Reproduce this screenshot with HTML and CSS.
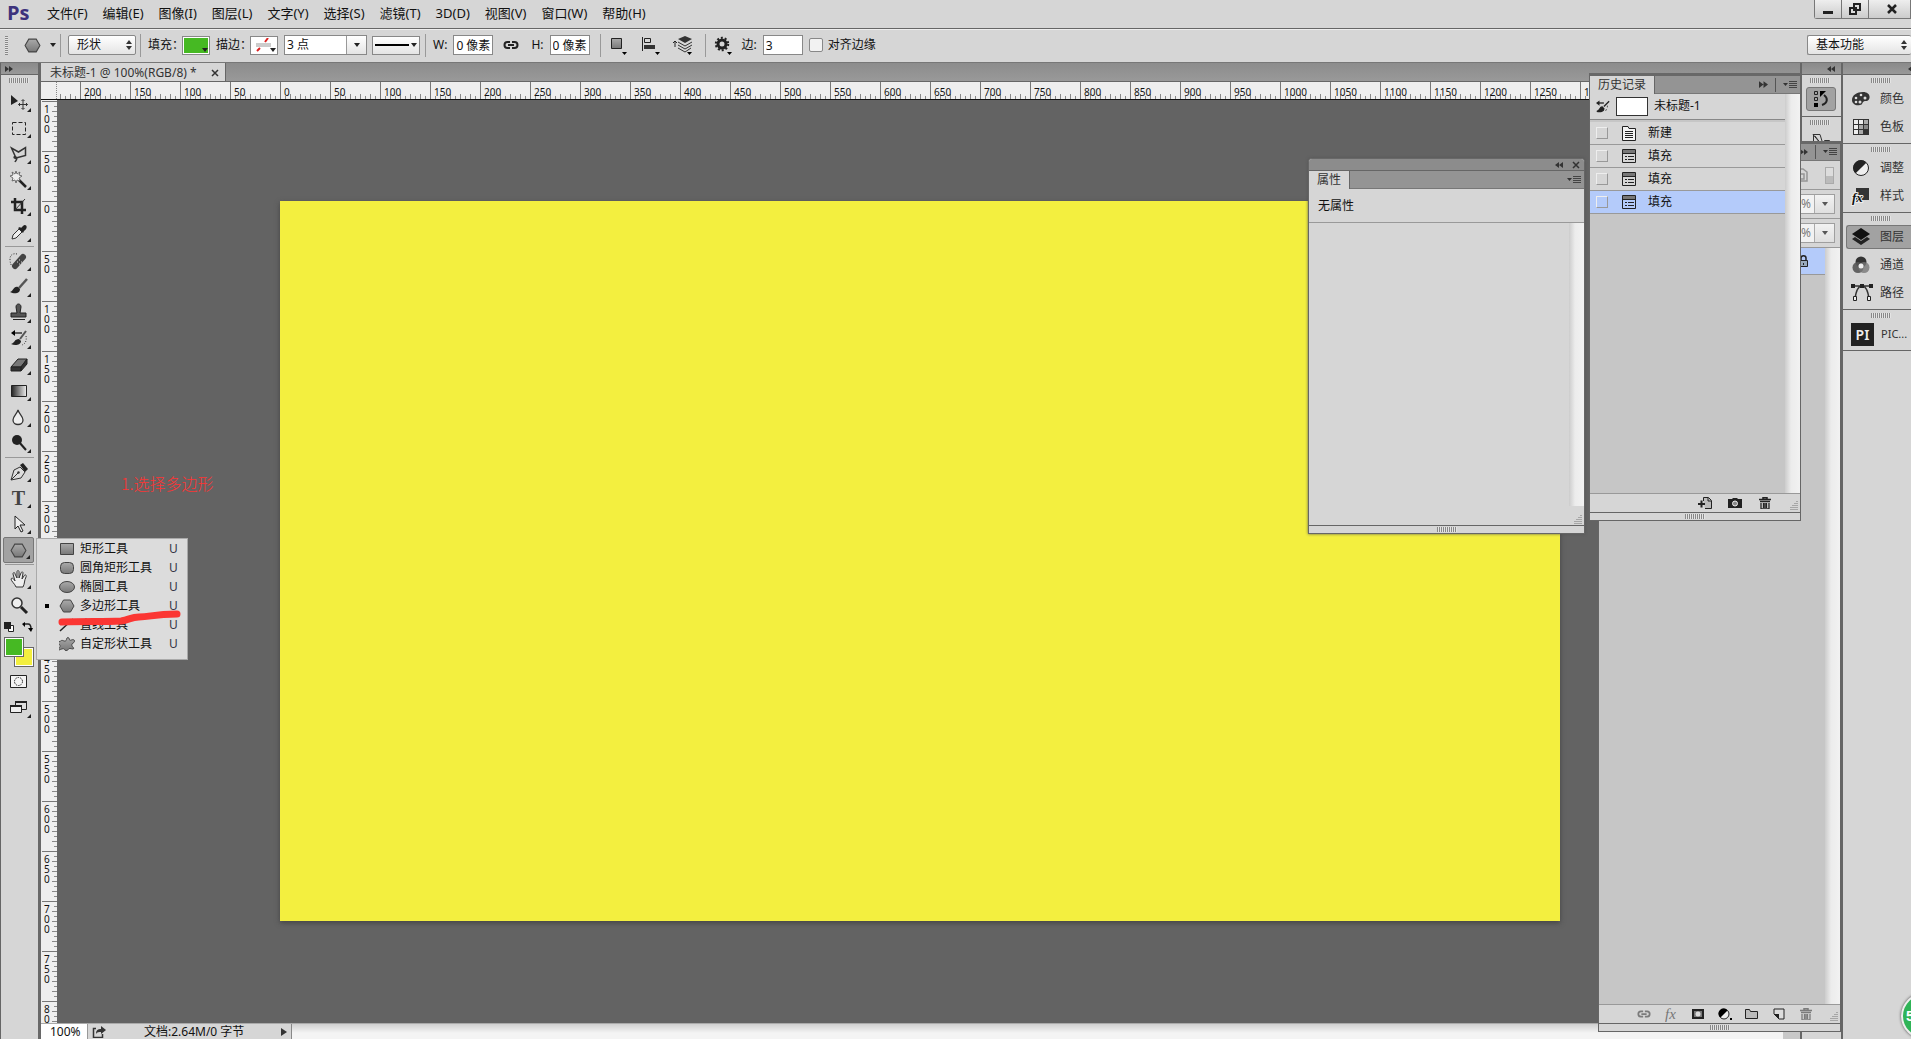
FILE: index.html
```html
<!DOCTYPE html>
<html lang="zh-CN">
<head>
<meta charset="utf-8">
<title>未标题-1 @ 100%(RGB/8)</title>
<link rel="stylesheet" href="styles.css">
</head>
<body>
<svg class="defs" aria-hidden="true">
  <defs>
    <linearGradient id="metal" x1="0" y1="0" x2="0" y2="1"><stop offset="0" stop-color="#aaa"/><stop offset="1" stop-color="#787878"/></linearGradient>
    <linearGradient id="ramp"><stop offset="0" stop-color="#222"/><stop offset="1" stop-color="#eee"/></linearGradient>
    <symbol id="i-left" viewBox="0 0 8 6"><path d="M4 0v6L0 3zM8 0v6L4 3z" fill="#333"/></symbol>
    <symbol id="i-right" viewBox="0 0 8 6"><path d="M0 0v6l4-3zM4 0v6l4-3z" fill="#333"/></symbol>
    <symbol id="i-menu" viewBox="0 0 14 10"><path d="M0 3h5L2.500 6z" fill="#333"/><path d="M6 1.500h8M6 3.500h8M6 5.500h8M6 7.500h8" stroke="#444"/></symbol>
    <symbol id="i-updown" viewBox="0 0 6 10"><path d="M0 4l3-4 3 4zM0 6l3 4 3-4z" fill="#333"/></symbol>
    <symbol id="i-hex" viewBox="0 0 16 14"><path d="M4.500 1h7L15 7l-3.500 6h-7L1 7z" fill="url(#metal)" stroke="#444"/></symbol>
    <symbol id="i-link" viewBox="0 0 16 10"><path d="M7 2H4.500a3 3 0 0 0 0 6H7M9 2h2.500a3 3 0 0 1 0 6H9M5 5h6" fill="none" stroke="currentColor" stroke-width="2"/></symbol>
    <symbol id="i-hist" viewBox="0 0 16 14"><path d="M15 1L9 7M7 7.500c-3 0-2 4-6 5 4 1 8 0 8-3z" stroke="#222" stroke-width="1.500" fill="#222"/><path d="M3 3h6" stroke="#222" stroke-width="1.500"/><path d="M4 0v6L0 3z" fill="#222"/><path d="M13 6v2M12 10l-1 2" stroke="#444"/></symbol>
    <symbol id="i-doc" viewBox="0 0 14 16"><path d="M.500 1.500H6l1 2h6.500v12H.500z" fill="#f4f4f4" stroke="#222"/><path d="M3 6.500h8M3 8.500h8M3 10.500h8M3 12.500h8" stroke="#222"/></symbol>
    <symbol id="i-fill" viewBox="0 0 14 14"><path d="M.500.500h13v13H.500z" fill="none" stroke="#222"/><path d="M1 1h12v3H1z" fill="#777"/><path d="M1 4.500h12M3 7.500h2M6 7.500h6M3 10.500h2M6 10.500h6" stroke="#222"/></symbol>
    <symbol id="i-trash" viewBox="0 0 12 12"><path d="M4 2V.700h4V2M0 2.500h12M1 4.500h10" stroke="currentColor" stroke-width="1.500" fill="none"/><path d="M2 6v6h8V6M4.500 6v5M7.500 6v5M6 6v5" fill="none" stroke="currentColor" stroke-width="1.300"/></symbol>
    <symbol id="i-size" viewBox="0 0 9 9"><path d="M8 0v9M6 2v7M4 4v7M2 6v3" stroke="#777" stroke-dasharray="1 1"/></symbol>
  </defs>
</svg>

<header class="menubar">
  <span class="brand">Ps</span>
  <nav class="menus">
    <button>文件(F)</button><button>编辑(E)</button><button>图像(I)</button><button>图层(L)</button><button>文字(Y)</button><button>选择(S)</button><button>滤镜(T)</button><button>3D(D)</button><button>视图(V)</button><button>窗口(W)</button><button>帮助(H)</button>
  </nav>
  <div class="winctl">
    <button aria-label="最小化"><svg width="12" height="12"><path d="M1 8h10v3H1z" fill="#222"/></svg></button>
    <button aria-label="还原"><svg width="12" height="12" viewBox="0 0 12 12"><path d="M5 1h6v6H5zM1 5h6v6H1z" fill="#ddd" stroke="#222" stroke-width="2"/></svg></button>
    <button class="close" aria-label="关闭"><svg width="12" height="12" viewBox="0 0 12 12"><path d="M2 2l8 8M10 2l-8 8" stroke="#222" stroke-width="2.500"/></svg></button>
  </div>
</header>

<section class="options">
  <i class="vgrip"></i>
  <button class="plain preset" aria-label="多边形工具"><svg width="17" height="15"><use href="#i-hex"/></svg><i class="tri"></i></button>
  <i class="sep"></i>
  <div class="pick"><select class="mode" aria-label="模式"><option>形状</option></select><svg width="6" height="10"><use href="#i-updown"/></svg></div>
  <i class="sep mid"></i>
  <span class="lbl fill-lbl">填充：</span>
  <button class="swatch green" aria-label="填充颜色"><i class="tri"></i></button>
  <span class="lbl stroke-lbl">描边：</span>
  <button class="swatch" aria-label="描边颜色"><svg width="22" height="14"><path d="M3 5h15v4H3z" fill="#ccc"/><path d="M4 13l3-3M12 4l3-4" stroke="#d22" stroke-width="2"/></svg><i class="tri"></i></button>
  <div class="combo"><input value="3 点" aria-label="描边宽度"><button aria-label="选择宽度"><i class="tri"></i></button></div>
  <button class="linetype" aria-label="描边类型"><b></b><i class="tri"></i></button>
  <i class="sep"></i>
  <label class="lbl" for="w">W:</label><input class="num" id="w" value="0 像素">
  <button class="plain link" aria-label="链接"><svg width="16" height="10"><use href="#i-link"/></svg></button>
  <label class="lbl h-lbl" for="h">H:</label><input class="num" id="h" value="0 像素">
  <i class="sep after"></i>
  <button class="plain act" aria-label="路径操作"><svg width="20" height="20"><path d="M2.500 3.500h10v10h-10z" fill="url(#metal)" stroke="#222"/><path d="M13 17h5l-2.500 3z"/></svg></button>
  <button class="plain act" aria-label="对齐"><svg width="20" height="20"><path d="M1.500 2v14" stroke="#222"/><path d="M3.500 3.500h6v4h-6z" fill="none" stroke="#222"/><path d="M3 10h11v4H3z" fill="#333"/><path d="M14 17h5l-2.500 3z"/></svg></button>
  <button class="plain act" aria-label="排列"><svg width="20" height="20"><path d="M12 1l7 3-7 4-7-4z" fill="#333"/><path d="M5 7l7 4 7-4M5 10l7 4 7-4M5 13l7 4 6-4" fill="none" stroke="#333"/><path d="M2 12V6M0 8l2-2 2 2" stroke="#222" fill="none"/><path d="M14 17h5l-2.500 3z"/></svg></button>
  <i class="sep"></i>
  <button class="plain act gear" aria-label="设置"><svg width="20" height="20"><circle cx="9" cy="9" r="4" fill="none" stroke="#222" stroke-width="3"/><circle cx="9" cy="9" r="6.200" fill="none" stroke="#222" stroke-width="2" stroke-dasharray="2 1.900"/><path d="M14 17h5l-2.500 3z"/></svg></button>
  <label class="lbl" for="sides">边:</label><input class="num" id="sides" value="3">
  <label class="check"><input type="checkbox">对齐边缘</label>
  <div class="pick space"><select aria-label="工作区"><option>基本功能</option></select><svg width="6" height="10"><use href="#i-updown"/></svg></div>
</section>

<main class="work">
  <aside class="tools">
    <div class="cap"><svg width="8" height="6"><use href="#i-right"/></svg></div>
    <i class="grip"></i>
    <button aria-label="移动"><svg width="20" height="20"><path d="M2 3v10l7-4z" fill="#222"/><path d="M14 8v9M9.500 12.500h9M12.500 9l1.500-1.500L15.500 9M12.500 16l1.500 1.500 1.500-1.500M11 11l-1.500 1.500L11 14M17 11l1.500 1.500L17 14" fill="none" stroke="#333"/></svg></button>
    <button aria-label="选框"><svg width="20" height="20"><path d="M3.500 4.500h13v12h-13z" fill="none" stroke="#222" stroke-dasharray="4 2"/></svg></button>
    <button aria-label="套索"><svg width="20" height="20"><path d="M7 14L2.500 4l7 4 7-4.500v8L7 14c-3 1-2-3 0-1s0 3-1 5" fill="none" stroke="#333" stroke-width="1.500"/></svg></button>
    <button aria-label="魔棒"><svg width="20" height="20"><path d="M10 10l7 7" stroke="#222" stroke-width="2.500"/><path d="M7 1l1 3 3-2-1 3 3 1-3 2 1 3-3-1-1 3-1-3-3 1 1-3-3-2 3-1-1-3 3 2z" fill="#eee" stroke="#555" stroke-width=".8"/></svg></button>
    <button aria-label="裁剪"><svg width="20" height="20"><path d="M6 2v12h11M2 6h11v12" fill="none" stroke="#222" stroke-width="2.500"/><path d="M6 14L16 3" stroke="#333"/></svg></button>
    <button aria-label="吸管"><svg width="20" height="20"><path d="M3 17l1-4 6-6 3 3-6 6z" fill="#eee" stroke="#333"/><path d="M9 6l5 5 1-2c5-3 2-8-1-5l-2 2-1-1z" fill="#222"/></svg></button>
    <hr>
    <button aria-label="修复画笔"><svg width="20" height="20"><path d="M6 15L14 6" stroke="#444" stroke-width="6" stroke-linecap="round"/><path d="M8 11h1M10 13h1M10 9h1M12 11h1" stroke="#ddd"/><path d="M8 3C4 2 1 4 1 8s1 6 2 7" fill="none" stroke="#333" stroke-dasharray="1 1.500"/></svg></button>
    <button aria-label="画笔"><svg width="20" height="20"><path d="M10 11l8-9" stroke="#555" stroke-width="2.500"/><path d="M9 10c-5-1-4 4-8 5 4 2 10 2 10-3z" fill="#222"/></svg></button>
    <button aria-label="图章"><svg width="20" height="20"><path d="M8 10L7 4c0-4 5-4 5 0l-1 6h6v4H2v-4z" fill="#555" stroke="#222"/><path d="M4 16.500h12" stroke="#222"/></svg></button>
    <button aria-label="历史记录画笔"><svg width="20" height="20"><path d="M11 10l6-8" stroke="#555" stroke-width="2"/><path d="M10 10c-5 0-4 4-8 5 4 2 10 1 10-3z" fill="#222"/><path d="M4 4h9" stroke="#333" stroke-width="1.500"/><path d="M6 1v6L2 4z"/><path d="M17 7c1 5-1 8-4 9" fill="none" stroke="#333" stroke-dasharray="1 1.500"/></svg></button>
    <button aria-label="橡皮擦"><svg width="20" height="20"><path d="M2 12l7-8h9l-6 8z" fill="#777" stroke="#222"/><path d="M2 12h10v4H2zM12 12l6-8v5l-6 7z" fill="#333" stroke="#222"/></svg></button>
    <button aria-label="渐变"><svg width="20" height="20"><path d="M2.500 4.500h15v11h-15z" fill="url(#ramp)" stroke="#222"/></svg></button>
    <button aria-label="模糊"><svg width="20" height="20"><path d="M9 3c1 4 5 6 5 10 0 6-10 6-10 0 0-4 4-6 5-10z" fill="#eee" stroke="#333" stroke-width="1.300"/></svg></button>
    <button aria-label="加深"><svg width="20" height="20"><circle cx="8" cy="7" r="5" fill="#222"/><path d="M10 9l7 8" stroke="#222" stroke-width="2"/></svg></button>
    <hr>
    <button aria-label="钢笔"><svg width="20" height="20"><path d="M2 18l3-10 6-3 5 5-4 6z" fill="#ddd" stroke="#333"/><path d="M2 18l7-7" stroke="#333"/><circle cx="9.500" cy="10.500" r="1.200" fill="#333"/><path d="M11 3l3-2 5 6-3 3z" fill="#222"/></svg></button>
    <button class="type" aria-label="文字">T</button>
    <button aria-label="选择"><svg width="20" height="20"><path d="M6 2v13l3-3 3 6 2-1-3-6h5z" fill="#eee" stroke="#222"/></svg></button>
    <button class="on" aria-label="多边形"><svg width="17" height="15"><use href="#i-hex"/></svg></button>
    <hr>
    <button aria-label="抓手"><svg width="20" height="20"><path d="M7 18c-1-3-5-6-5-8 1-2 3 0 4 2L4 5c0-2 2-2 2 0l2 4V3c0-2 2-2 2 0v6l2-5c1-2 2-1 2 0l-1 6 2-3c1-2 3-1 2 1-2 4-1 6-3 10z" fill="#eee" stroke="#333"/></svg></button>
    <button class="flat" aria-label="缩放"><svg width="20" height="20"><circle cx="8" cy="8" r="5" fill="#eee" stroke="#333" stroke-width="1.500"/><path d="M12 12l6 6" stroke="#222" stroke-width="3"/></svg></button>
    <div class="reset">
      <svg width="11" height="10"><path d="M4.500 3.500h5v6h-5z" fill="#fff" stroke="#222"/><path d="M0 0h7v7H0z" fill="#222"/></svg>
      <svg width="11" height="10"><path d="M2 2h4q3 0 3 5" fill="none" stroke="#222" stroke-width="1.500"/><path d="M3 0v5L0 2zM6 6h5l-2 4z"/></svg>
    </div>
    <div class="colors"><button class="bg" aria-label="背景色"></button><button class="fg" aria-label="前景色"></button></div>
    <button class="flat" aria-label="快速蒙版"><svg width="20" height="20"><path d="M1.500 3.500h16v12h-16z" fill="#f4f4f4" stroke="#222"/><circle cx="9.500" cy="9.500" r="4" fill="none" stroke="#222" stroke-dasharray="1.500 1"/></svg></button>
    <button aria-label="屏幕模式"><svg width="20" height="20"><path d="M6.500 3.500h11v8h-11z" fill="#ddd" stroke="#222"/><path d="M1.500 7.500h11v7h-11z" fill="#eee" stroke="#222"/><path d="M6 4h12M1 8h12" stroke="#222" stroke-width="2"/></svg></button>
  </aside>

  <section class="doc">
    <div class="tabs"><div class="tab"><span>未标题-1 @ 100%(RGB/8) *</span><button class="plain" aria-label="关闭文档"><svg width="8" height="8"><path d="M1 1l6 6M7 1L1 7" stroke="#333" stroke-width="1.500"/></svg></button></div></div>
    <div class="hruler"><i class="corner"></i><div class="hscale"><span>200</span><span>150</span><span>100</span><span>50</span><span>0</span><span>50</span><span>100</span><span>150</span><span>200</span><span>250</span><span>300</span><span>350</span><span>400</span><span>450</span><span>500</span><span>550</span><span>600</span><span>650</span><span>700</span><span>750</span><span>800</span><span>850</span><span>900</span><span>950</span><span>1000</span><span>1050</span><span>1100</span><span>1150</span><span>1200</span><span>1250</span><span>1300</span></div></div>
    <div class="stage">
      <div class="vruler"><span>100</span><span>50</span><span>0</span><span>50</span><span>100</span><span>150</span><span>200</span><span>250</span><span>300</span><span>350</span><span>400</span><span>450</span><span>500</span><span>550</span><span>600</span><span>650</span><span>700</span><span>750</span><span>80</span></div>
      <div class="view"><div class="art"></div><p class="note">1.选择多边形</p></div>
    </div>
    <footer class="status">
      <input value="100%" aria-label="缩放比例">
      <svg class="share" width="14" height="12"><path d="M4 2.500H1.500v9h9V8" fill="none" stroke="#333" stroke-width="1.500"/><path d="M4 8c0-4 2-5 5-5V0l5 4-5 4V6C7 6 5 6 4 8z" fill="#333"/></svg>
      <span>文档:2.64M/0 字节</span>
      <i class="play"></i><div class="hscroll"></div><i class="box"></i>
    </footer>
  </section>

  <aside class="dock narrow">
    <div class="cap"><svg width="8" height="6"><use href="#i-left"/></svg></div>
    <div class="group"><i class="grip"></i><button class="on" aria-label="历史记录"><svg width="18" height="18" viewBox="0 0 16 18"><path d="M1.500 1.500h3v3h-3zM1.500 7.500h3v3h-3z" fill="none" stroke="#222"/><path d="M1 13h4v4H1z"/><path d="M9 15c6-2 6-7 2-10" fill="none" stroke="#222" stroke-width="2"/><path d="M7 7V1h6z"/></svg></button></div>
    <div class="group"><i class="grip"></i><button aria-label="属性"><svg width="22" height="18"><path d="M3.500 2v15M3 2.500h7l4 13zM5 4l9 12M14.500 8.500h5v6h-5z" fill="none" stroke="#333"/></svg></button></div>
  </aside>

  <aside class="dock wide">
    <div class="cap"><svg width="8" height="6"><use href="#i-left"/></svg></div>
    <div class="group"><i class="grip"></i>
      <button><svg width="20" height="20"><path d="M1 11C1 6 6 3 12 3c9 0 8 10 2 9-3 0-2 4-5 4-4 1-8-1-8-5z" fill="#333"/><g fill="#ddd"><circle cx="5" cy="9" r="1.300"/><circle cx="5" cy="13" r="1.300"/><circle cx="9" cy="13" r="1.500"/><circle cx="14" cy="9" r="1.500"/><circle cx="10" cy="6" r="1.300"/></g></svg>颜色</button>
      <button><svg width="20" height="20"><path d="M2 2h16v16H2z" fill="#333"/><path d="M3 3h4v4H3zM3 8h4v4H3zM3 13h4v4H3zM8 3h4v4H8z" fill="#eee"/><path d="M13 3h4v4h-4zM8 8h4v4H8zM8 13h4v4H8z" fill="#aaa"/><path d="M13 8h4v4h-4z" fill="#888"/></svg>色板</button></div>
    <div class="group"><i class="grip"></i>
      <button><svg width="20" height="20"><circle cx="10" cy="10" r="7.500" fill="#eee" stroke="#222"/><path d="M4.700 15.300A7.500 7.500 0 1 1 15.300 4.700z" fill="#222"/></svg>调整</button>
      <button><svg width="20" height="20"><path d="M5 2h13v12H5z" fill="#333"/><text x="1" y="16" class="fx">fx</text></svg>样式</button></div>
    <div class="group"><i class="grip"></i>
      <button class="on"><svg width="20" height="20"><path d="M10 1l9 6-9 6-9-6z" fill="#111"/><path d="M1 12l3-2 6 4 6-4 3 2-9 6z" fill="#222"/></svg>图层</button>
      <button><svg width="20" height="20"><circle cx="10" cy="7" r="5.500" fill="#333"/><circle cx="7" cy="12.500" r="5.500" fill="#555" opacity=".9"/><circle cx="13" cy="12.500" r="5.500" fill="#777" opacity=".8"/><circle cx="10" cy="11" r="2.500" fill="#eee"/></svg>通道</button>
      <button><svg width="22" height="20"><path d="M2 3h18M4 16C5 8 7 3 11 3s6 5 7 13" fill="none" stroke="#333" stroke-width="1.500"/><path d="M0 1h4v4H0zM9 1h4v4H9zM18 1h4v4h-4z" fill="#222"/><path d="M2.500 13.500h3v4h-3zM16.500 13.500h3v4h-3z" fill="#eee" stroke="#222"/></svg>路径</button></div>
    <div class="group last"><i class="grip"></i><button><b class="pi">PI</b>PIC...</button></div>
  </aside>

  <section class="panel layers">
    <div class="ptabs"><i class="stretch"></i><svg width="8" height="6"><use href="#i-right"/></svg><i class="bar"></i><svg width="14" height="10"><use href="#i-menu"/></svg></div>
    <div class="prow"><svg class="dim" width="12" height="14"><path d="M1 1h6l4 3v9H1zM3 6h5v5H3z" fill="none" stroke="#555" stroke-width="1.500"/></svg><i class="toggle"></i></div>
    <div class="prow"><div class="combo off"><input value="100%" aria-label="不透明度" disabled><button aria-label="不透明度选项" disabled><i class="tri"></i></button></div></div>
    <div class="prow"><div class="combo off"><input value="100%" aria-label="填充" disabled><button aria-label="填充选项" disabled><i class="tri"></i></button></div></div>
    <div class="list"><div class="items"><div class="layer"><svg width="11" height="13"><path d="M3 6V3c0-3 5-3 5 0v3" fill="none" stroke="#222" stroke-width="1.500"/><path d="M1.500 5.500h8v6h-8z" fill="#9ab" stroke="#222"/><path d="M5.500 8v2" stroke="#222"/></svg></div></div><i class="vscroll"></i></div>
    <div class="pfoot">
      <button class="dim" aria-label="链接图层"><svg width="14" height="10"><use href="#i-link"/></svg></button>
      <button class="dim" aria-label="图层样式"><em>fx</em></button>
      <button aria-label="蒙版"><svg width="12" height="10"><path d="M1 1h10v8H1z" fill="#777" stroke="#222" stroke-width="2"/><circle cx="6" cy="5" r="2.500" fill="#ddd"/></svg></button>
      <button aria-label="调整图层"><svg width="14" height="12"><circle cx="6" cy="6" r="5" fill="#eee" stroke="#222"/><path d="M2.500 9.500a5 5 0 1 1 7-7z"/><path d="M12 10h2v2h-2z"/></svg></button>
      <button aria-label="新建组"><svg width="13" height="12"><path d="M.500 1.500h4l1 2h7v7H.500z" fill="#bbb" stroke="#222"/></svg></button>
      <button aria-label="新建图层"><svg width="12" height="12"><path d="M1 1h10v10H6L1 6z" fill="#ddd" stroke="#222"/><path d="M1 6h5v5z" fill="#222"/></svg></button>
      <button class="dim" aria-label="删除图层"><svg width="12" height="12"><use href="#i-trash"/></svg></button>
      <svg class="size" width="9" height="9"><use href="#i-size"/></svg>
    </div>
    <div class="pend"><i class="grip"></i></div>
  </section>

  <section class="panel history">
    <div class="ptabs"><h2>历史记录</h2><i class="stretch"></i><svg width="9" height="7"><use href="#i-right"/></svg><i class="bar"></i><svg width="14" height="10"><use href="#i-menu"/></svg></div>
    <div class="list"><div class="items">
      <div class="snap"><svg width="14" height="13"><use href="#i-hist"/></svg><i></i>未标题-1</div>
      <label class="state"><input type="checkbox"><svg width="14" height="16"><use href="#i-doc"/></svg>新建</label>
      <label class="state"><input type="checkbox"><svg width="14" height="14"><use href="#i-fill"/></svg>填充</label>
      <label class="state"><input type="checkbox"><svg width="14" height="14"><use href="#i-fill"/></svg>填充</label>
      <label class="state sel"><input type="checkbox"><svg width="14" height="14"><use href="#i-fill"/></svg>填充</label>
    </div><i class="vscroll"></i></div>
    <div class="pfoot">
      <button aria-label="新文档"><svg width="14" height="12"><path d="M5.500 4V.500h5l3 3v8H7" fill="#bbb" stroke="#222"/><path d="M10 1v3h3" fill="none" stroke="#222"/><path d="M0 7h7M3.500 3.500v7" stroke="#222" stroke-width="2"/></svg></button>
      <button aria-label="快照"><svg width="14" height="12"><path d="M0 2h4l1-1h4l1 1h4v9H0z" fill="#222"/><circle cx="7" cy="6.500" r="2.500" fill="#888" stroke="#eee"/></svg></button>
      <button aria-label="删除"><svg width="12" height="12"><use href="#i-trash"/></svg></button>
      <svg class="size" width="9" height="9"><use href="#i-size"/></svg>
    </div>
    <div class="pend"><i class="grip"></i></div>
  </section>

  <section class="panel props">
    <div class="ptop"><svg width="8" height="6"><use href="#i-left"/></svg><svg width="8" height="8"><path d="M1 1l6 6M7 1L1 7" stroke="#333" stroke-width="1.500"/></svg></div>
    <div class="ptabs"><h2>属性</h2><i class="stretch"></i><svg width="14" height="10"><use href="#i-menu"/></svg></div>
    <p class="none">无属性</p>
    <div class="list"><div class="items"></div><i class="vscroll"></i></div>
    <div class="pcorner"><svg class="size" width="9" height="9"><use href="#i-size"/></svg></div>
    <div class="pend"><i class="grip"></i></div>
  </section>

  <div class="flyout" role="menu">
    <button role="menuitem"><i></i><svg width="16" height="14"><path d="M1.500 1.500h13v11h-13z" fill="url(#metal)" stroke="#444"/></svg><span>矩形工具</span><kbd>U</kbd></button>
    <button role="menuitem"><i></i><svg width="16" height="14"><rect x="1.500" y="1.500" width="13" height="11" rx="4" fill="url(#metal)" stroke="#444"/></svg><span>圆角矩形工具</span><kbd>U</kbd></button>
    <button role="menuitem"><i></i><svg width="16" height="14"><ellipse cx="8" cy="7" rx="7.500" ry="5.500" fill="url(#metal)" stroke="#444"/></svg><span>椭圆工具</span><kbd>U</kbd></button>
    <button role="menuitem"><i class="cur"></i><svg width="16" height="14"><use href="#i-hex"/></svg><span>多边形工具</span><kbd>U</kbd></button>
    <button role="menuitem"><i></i><svg width="16" height="14"><path d="M1 13L14 1" stroke="#222" stroke-width="1.500"/></svg><span>直线工具</span><kbd>U</kbd></button>
    <button role="menuitem"><i></i><svg width="16" height="16" viewBox="0 0 17 16"><path d="M1 5c2-2 3 0 5 0s1-4 3-4 1 4 3 3 4-1 4 1-3 2-3 4 3 3 2 4-4-1-5 0-1 2-3 2-1-2-3-2-4 2-5 1 2-3 2-4-3-2-3-4z" transform="translate(.5)" fill="url(#metal)" stroke="#444"/></svg><span>自定形状工具</span><kbd>U</kbd></button>
    <svg class="mark" width="124" height="18"><path d="M5 13C30 12 45 13 64 12C72 11 74 8 82 8C94 8 96 5 120 5" fill="none" stroke="#fb3633" stroke-width="7" stroke-linecap="round"/></svg>
  </div>

  <div class="badge">5</div>
</main>
</body>
</html>
```
FILE: styles.css
```css
* { box-sizing: border-box; }
body {
  margin: 0; height: 100vh; overflow: hidden;
  display: flex; flex-direction: column;
  background: #d6d6d6; color: #111;
  font: 12px/16px "Noto Sans", "Noto Sans CJK SC", sans-serif;
}
button, input, select { font: inherit; color: inherit; margin: 0; padding: 0; border: 0; border-radius: 0; background: none; }
svg, i { display: block; flex: none; }
svg { color: #222; }
.defs { position: absolute; width: 0; height: 0; }
.tri { width: 0; height: 0; border: 3px solid transparent; border-top: 4px solid #222; border-bottom: 0; }
.grip { width: 20px; height: 5px; background: repeating-linear-gradient(90deg, #888 0 1px, #e4e4e4 1px 2px); }
.stretch { flex: 1; }
.dim { opacity: .5; }

.menubar { height: 29px; flex: none; display: flex; border-bottom: 1px solid #666; background: #d6d6d6; }
.brand { width: 38px; padding-left: 7px; color: #3c327c; font: bold 20px/26px "Open Sans", sans-serif; }
.menus { flex: 1; display: flex; gap: 15px; padding: 0 0 2px 9px; font-size: 13px; }
.winctl { display: flex; height: 19px; border: 1px solid #777; border-top: 0; border-right: 0; border-radius: 0 0 0 3px; }
.winctl button { width: 27px; display: flex; align-items: center; justify-content: center; background: linear-gradient(#eee, #ccc); border-right: 1px solid #777; }
.winctl .close { width: 42px; padding-left: 4px; }

.options { height: 34px; flex: none; display: flex; align-items: center; border-top: 1px solid #eee; border-bottom: 1px solid #777; padding: 0 0 2px 5px; }
.vgrip { width: 3px; height: 19px; margin-right: 16px; background: repeating-linear-gradient(#888 0 1px, #e4e4e4 1px 2px); }
.preset { display: flex; align-items: center; gap: 9px; margin-right: 4px; }
.sep { width: 1px; height: 23px; background: #999; margin-right: 7px; }
.sep.mid { margin-left: 4px; }
.sep.after { margin: 0 8px 0 10px; }
.lbl { white-space: nowrap; }
.fill-lbl, .stroke-lbl { width: 34px; }
.stroke-lbl { margin-left: 6px; }
.pick { position: relative; width: 68px; height: 20px; }
.pick select { appearance: none; width: 100%; height: 100%; padding-left: 8px; border: 1px solid #888; border-radius: 2px; background: linear-gradient(#fff, #e4e4e4); }
.pick svg { position: absolute; right: 4px; top: 5px; pointer-events: none; }
.space { width: 104px; margin-left: auto; }
.space select { border-right: 0; }
.swatch { position: relative; width: 28px; height: 19px; border: 1px solid #888; background: #fff; padding: 1px 2px; }
.swatch.green { background: #46b923; border: 1px solid #888; box-shadow: inset 0 0 0 1px #fff; }
.swatch .tri { position: absolute; right: 1px; bottom: 2px; }
.combo { display: flex; width: 83px; height: 20px; margin: 0 5px 0 6px; border: 1px solid #888; background: #fff; }
.combo input { flex: 1; min-width: 0; padding-left: 2px; }
.combo button { width: 20px; display: flex; align-items: center; justify-content: center; border-left: 1px solid #999; background: linear-gradient(#fff, #e4e4e4); }
.linetype { display: flex; align-items: center; width: 48px; height: 19px; padding-left: 2px; gap: 2px; margin-right: 5px; border: 1px solid #888; background: linear-gradient(#fff, #e4e4e4); }
.linetype b { width: 34px; height: 2px; background: #000; }
.num { width: 40px; height: 20px; margin-left: 6px; padding-left: 2px; border: 1px solid #888; background: #fff; }
.link { padding: 0 12px 0 10px; }
.act { width: 32px; display: flex; }
.gear { width: 29px; }
.check { display: flex; align-items: center; gap: 5px; margin-left: 6px; }
.check input { appearance: none; width: 14px; height: 14px; border: 1px solid #888; border-radius: 2px; background: #f2f2f2; }

.work { position: relative; flex: 1; min-height: 0; display: flex; }
.cap { height: 12px; background: linear-gradient(#8a8a8a, #999); border-bottom: 1px solid #666; display: flex; align-items: center; padding: 0 4px; }
.tools { width: 41px; flex: none; border-left: 1px solid #666; border-right: 3px solid #686868; background: #d6d6d6; display: flex; flex-direction: column; }
.tools > .grip { margin: 3px 0 6px 8px; }
.tools > button { position: relative; flex: none; width: 31px; height: 26px; margin-left: 2px; display: flex; align-items: center; justify-content: center; }
.tools > button:not(.flat)::after { content: ""; position: absolute; right: 3px; bottom: 3px; border: 2px solid transparent; border-right-color: #222; border-bottom-color: #222; }
.tools hr { width: 29px; height: 3px; flex: none; margin: 0 0 0 4px; border: 0; background: linear-gradient(transparent 33%, #999 33% 67%, transparent 67%); }
.tools > button.type { font: bold 20px/24px "Liberation Serif", serif; color: #444; }
.tools > button.on { border: 1px solid #777; border-radius: 2px; background: #a2a2a2; }
.reset { display: flex; gap: 7px; padding: 4px 0 5px 3px; }
.colors { position: relative; height: 30px; margin-bottom: 2px; }
.colors button { position: absolute; width: 20px; height: 20px; border: 1px solid #666; box-shadow: inset 0 0 0 1px #fff; }
.colors .fg { left: 3px; top: 0; background: #46b923; }
.colors .bg { left: 13px; top: 10px; background: #f3ef3f; }

.doc { flex: 1; min-width: 0; display: flex; flex-direction: column; background: #636363; }
.tabs { height: 19px; flex: none; display: flex; background: linear-gradient(#8c8c8c, #999); border-bottom: 1px solid #666; }
.tab { width: 185px; display: flex; align-items: center; justify-content: space-between; padding: 2px 6px 0 9px; background: #d6d6d6; border-right: 1px solid #666; white-space: nowrap; color: #333; }
.hruler { height: 18px; flex: none; display: flex; border-bottom: 1px solid #111; background: #eee; }
.corner { width: 16px; border-right: 1px dotted #888; }
.hscale {
  flex: 1; display: flex; overflow: hidden; padding-left: 23px;
  background:
    repeating-linear-gradient(90deg, #888 0 1px, transparent 1px 10px) 3px 100% / 100% 5px no-repeat,
    repeating-linear-gradient(90deg, #888 0 1px, transparent 1px 5px) 3px 100% / 100% 3px no-repeat;
}
.hscale span { flex: none; width: 50px; padding: 2px 0 0 3px; border-left: 1px solid #777; font-size: 10px; }
.stage { flex: 1; min-height: 0; display: flex; }
.vruler {
  width: 16px; flex: none; overflow: hidden; padding-top: 1px; border-left: 1px solid #eee;
  background:
    repeating-linear-gradient(#888 0 1px, transparent 1px 10px) 100% 1px / 5px 100% no-repeat,
    repeating-linear-gradient(#888 0 1px, transparent 1px 5px) 100% 1px / 3px 100% no-repeat,
    #eee;
}
.vruler span { display: block; height: 50px; padding: 2px 7px 0 2px; border-top: 1px solid #777; font-size: 10px; line-height: 10px; word-break: break-all; }
.vruler span:last-child { height: 22px; }
.view { position: relative; flex: 1; overflow: hidden; }
.art { width: 1280px; height: 720px; margin: 101px 0 0 223px; background: #f3ef3f; box-shadow: 0 2px 5px #444; }
.note { position: absolute; left: 64px; top: 371px; margin: 0; color: #f33; font: 300 16px/24px "Noto Sans CJK SC", sans-serif; }
.status { height: 16px; flex: none; display: flex; align-items: center; background: #d6d6d6; border-top: 1px solid #aaa; }
.status input { width: 47px; height: 100%; padding-left: 9px; background: #fff; border-right: 1px solid #999; }
.status span { width: 138px; padding-left: 38px; white-space: nowrap; }
.share { margin-left: 4px; }
.play { border: 4px solid transparent; border-left: 6px solid #333; border-right: 0; margin-right: 4px; }
.status .play { margin-left: 37px; }
.hscroll { flex: 1; height: 100%; border-left: 1px solid #888; background: linear-gradient(#d0d0d0, #f4f4f4 60%); }
.box { width: 17px; height: 100%; background: #c8c8c8; }

.dock { flex: none; background: #d6d6d6; border-left: 2px solid #666; overflow: hidden; }
.dock .cap { justify-content: flex-end; }
.narrow { width: 41px; }
.wide { width: 70px; }
.narrow .cap { padding-right: 6px; }
.wide .cap { padding: 0; }
.wide .cap svg { margin-right: -5px; }
.group { border-bottom: 1px solid #666; display: flex; flex-direction: column; align-items: flex-start; padding: 3px 0 1px; }
.group .grip { width: 20px; margin-bottom: 3px; }
.wide .grip { margin-left: 28px; }
.narrow .grip { margin: 0 0 4px 8px; }
.group button { display: flex; align-items: center; gap: 7px; height: 24px; padding-left: 5px; white-space: nowrap; color: #333; }
.wide .group button { width: 65px; margin: 1px 0 3px 3px; }
.group button svg { width: 22px; }
.narrow .group button { width: 30px; margin: 0 0 4px 4px; padding-left: 4px; }
.group button.on { border: 1px solid #777; border-right-width: 0; border-radius: 3px 0 0 3px; padding-left: 4px; background: #a2a2a2; }
.narrow .group button.on { border-right-width: 1px; border-radius: 3px; padding-left: 3px; }
.fx { font: italic bold 13px "Liberation Serif", serif; fill: #111; stroke: #eee; stroke-width: 2px; paint-order: stroke; }
.pi { width: 23px; height: 23px; background: #222; color: #eee; font: 600 14px/23px "Noto Sans", sans-serif; text-align: center; }
.last { font-size: 11px; }

.panel { position: absolute; display: flex; flex-direction: column; background: #d6d6d6; border: 1px solid #666; border-top: 3px solid #686868; }
.layers { right: 70px; width: 243px; top: 78px; bottom: 7px; }
.history { right: 110px; width: 212px; top: 10px; height: 448px; }
.props { right: 326px; width: 277px; top: 95px; height: 376px; border-top-width: 1px; border-radius: 4px 4px 0 0; box-shadow: 0 0 3px #555; }
.ptop { height: 12px; flex: none; display: flex; align-items: center; justify-content: flex-end; gap: 9px; padding-right: 4px; background: #8c8c8c; border-bottom: 1px solid #666; border-radius: 3px 3px 0 0; }
.ptabs { height: 18px; flex: none; display: flex; align-items: center; gap: 7px; padding-right: 3px; background: #949494; border-bottom: 1px solid #777; }
.layers .ptabs { height: 17px; }
.ptabs h2 { margin: 0; align-self: stretch; padding: 0 8px; height: 18px; background: #d6d6d6; border-right: 1px solid #666; font-size: 12px; font-weight: 400; line-height: 17px; color: #333; }
.bar { width: 1px; height: 14px; background: #555; }
.list { flex: 1; min-height: 0; display: flex; }
.items { flex: 1; background: #c6c6c6; }
.vscroll { width: 15px; background: linear-gradient(90deg, #ccc, #ececec 40%, #f2f2f2); }
.pfoot { height: 19px; flex: none; display: flex; align-items: center; justify-content: flex-end; border-top: 1px solid #999; }
.pfoot button { width: 27px; display: flex; justify-content: center; }
.pfoot em { font: italic 15px/16px "Liberation Serif", serif; }
.pfoot .size { margin: 4px 2px 0 10px; }
.history .pfoot button { width: 30px; }
.history .pfoot .size { margin-left: 9px; }
.pend { height: 8px; flex: none; border-top: 1px solid #666; display: flex; align-items: center; justify-content: center; }
.prow { height: 29px; flex: none; display: flex; align-items: center; justify-content: flex-end; border-bottom: 1px solid #999; }
.toggle { width: 9px; height: 17px; margin: 0 6px 0 17px; border: 1px solid #aaa; background: linear-gradient(#ddd 50%, #bbb 50%); }
.combo.off { width: 64px; margin: 0 5px 0 0; color: #555; opacity: .7; }
.combo.off input { text-align: right; padding-right: 3px; }
.layer { height: 27px; display: flex; align-items: center; justify-content: flex-end; padding-right: 16px; background: #b4cbfa; border-bottom: 1px solid #999; }
.snap { height: 26px; display: flex; align-items: center; gap: 6px; padding: 0 0 1px 6px; margin-bottom: 2px; background: #d6d6d6; border-bottom: 1px solid #888; }
.snap i { width: 32px; height: 19px; background: #fff; border: 1px solid #333; }
.state { height: 23px; display: flex; align-items: center; gap: 14px; padding-left: 6px; background: #d6d6d6; border-bottom: 1px solid #999; }
.state input { appearance: none; width: 12px; height: 12px; border: 1px solid; border-color: #eee #999 #999 #eee; }
.state svg { margin-right: -2px; }
.state.sel { background: #b4cbfa; }
.none { margin: 0; height: 34px; flex: none; padding: 9px; border-bottom: 1px solid #999; }
.props .items { background: #d6d6d6; }
.pcorner { height: 19px; flex: none; display: flex; justify-content: flex-end; align-items: flex-end; }
.pcorner .size { margin: 0 2px 1px 0; }

.flyout { position: absolute; left: 36px; top: 475px; width: 152px; padding: 0 0 6px; background: #dcdcdc; border: 1px solid #aaa; }
.flyout button { width: 100%; height: 19px; display: flex; align-items: center; padding-left: 8px; }
.flyout i { width: 4px; height: 4px; margin-right: 10px; }
.flyout .cur { background: #000; }
.flyout span { flex: 1; text-align: left; padding-left: 5px; white-space: nowrap; }
.flyout kbd { width: 18px; font: inherit; color: #334; text-align: left; }
.flyout .mark { position: absolute; left: 20px; top: 70px; }

.badge { position: absolute; right: -36px; bottom: 0; width: 46px; height: 46px; border-radius: 50%; border: 2px solid #eee; background: #2fb457; box-shadow: 0 0 3px #444; color: #fff; font: bold 14px/42px "Liberation Sans", sans-serif; padding-left: 3px; }
```
